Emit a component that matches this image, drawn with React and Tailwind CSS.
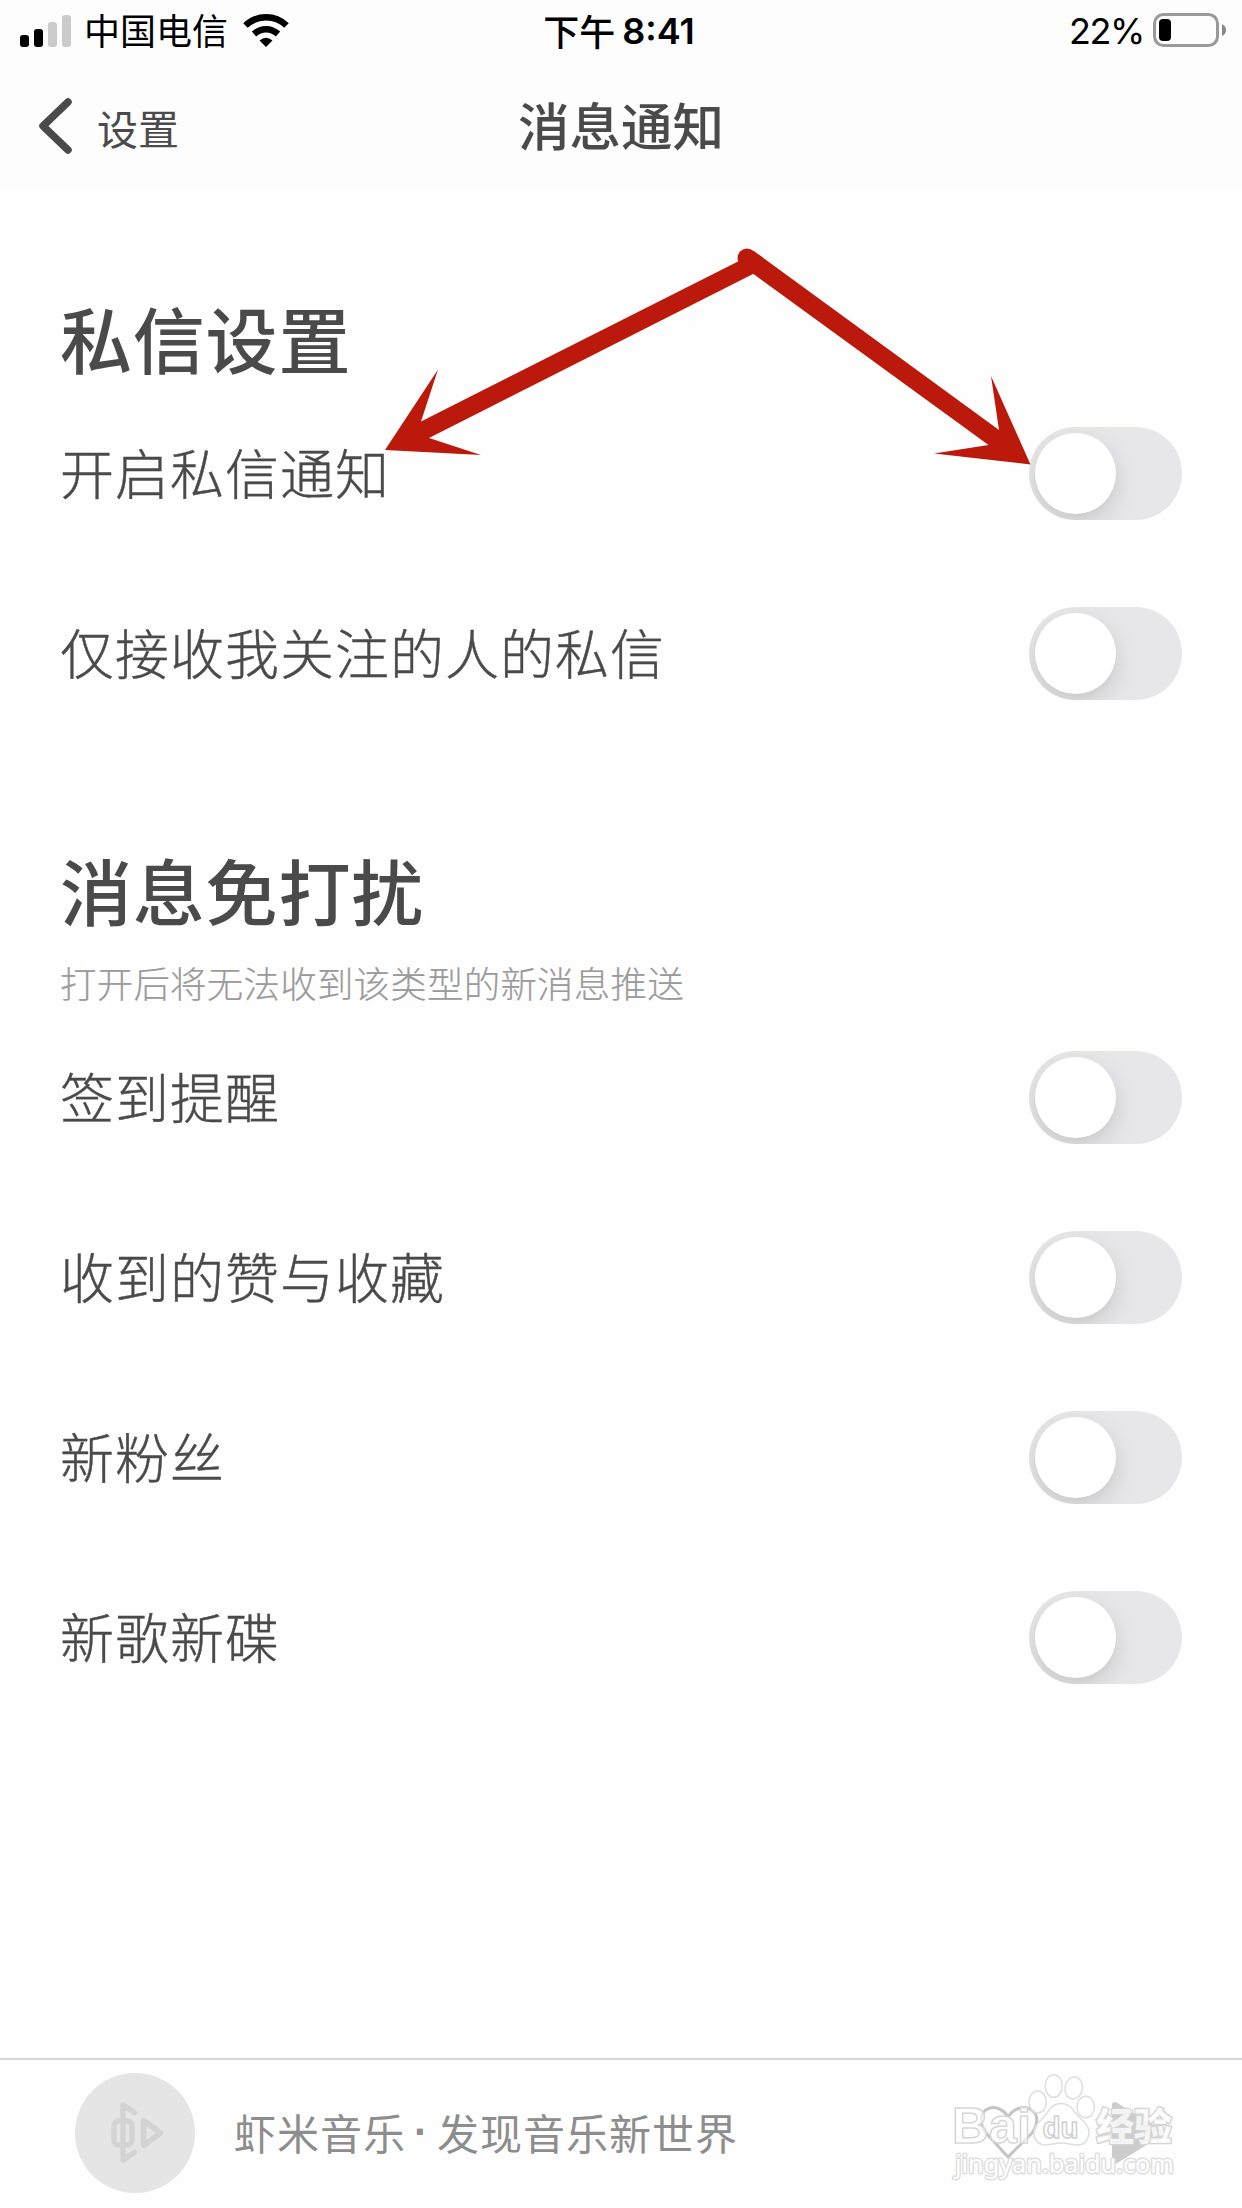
import React from "react";

const messageRows = ["开启私信通知", "仅接收我关注的人的私信"];
const quietRows = ["签到提醒", "收到的赞与收藏", "新粉丝", "新歌新碟"];

function Toggle() {
  return (
    <span className="block h-[93px] w-[153px] overflow-hidden rounded-full bg-[#e7e7e9] p-[6px]">
      <span className="block size-[81px] rounded-full bg-white shadow-[0_9px_24px_rgba(0,0,0,0.13),0_3px_6px_rgba(0,0,0,0.02)]" />
    </span>
  );
}

function Row({ label }) {
  return (
    <div className="flex h-[180px] items-center justify-between">
      <span className="-mt-[3px] text-[54px] font-light leading-[76px] tracking-[1px] [-webkit-text-stroke:0.4px_#4a4a4a]">{label}</span>
      <Toggle />
    </div>
  );
}

function StatusBar() {
  return (
    <div className="flex h-[62px] items-center justify-between pl-5 pr-[15px] text-black">
      <div className="flex w-[400px] items-center">
        <svg className="h-8 w-[51px]" viewBox="0 0 51 32">
          <rect x="0" y="20" width="9" height="12" rx="3" />
          <rect x="14" y="14" width="9" height="18" rx="3" />
          <rect x="28" y="7" width="9" height="25" rx="3" fill="#cbcbcb" />
          <rect x="42" y="0" width="9" height="32" rx="3" fill="#cbcbcb" />
        </svg>
        <span className="-mt-1 ml-[13px] text-[36px] leading-[50px]">中国电信</span>
        <svg className="-mt-[2px] ml-[15px] h-[33px] w-[46px]" viewBox="0 0 46 33" fill="none" stroke="#000" strokeWidth="6.5">
          <path d="M2.500 11.500C14 .5 32 .5 43.500 11.500" />
          <path d="M11 20C18 13.500 28 13.500 35 20" />
          <path d="M16.500 26.500Q23 21 29.500 26.500L23 33Z" fill="#000" stroke="none" />
        </svg>
      </div>
      <div className="-ml-[9px] flex items-center text-[36px] font-medium leading-[50px]">
        <span className="-mt-[3px]">下午</span>
        <span className="ml-[7px] font-[Inter] text-[36px] font-semibold">8:41</span>
      </div>
      <div className="flex w-[400px] items-center justify-end">
        <span className="font-[Inter] text-[36px] font-normal leading-[50px] tracking-[-1.400px]">22%</span>
        <svg className="-mt-[2px] ml-[9px] h-[34px] w-[74px]" viewBox="0 0 74 34">
          <rect x="1.500" y="1.500" width="63" height="31" rx="9" fill="none" stroke="#999" strokeWidth="3" />
          <rect x="6" y="6" width="12" height="22" rx="4" />
          <path d="M69 11Q73 13 73 17T69 23Z" fill="#888" />
        </svg>
      </div>
    </div>
  );
}

function Arrows() {
  return (
    <svg className="pointer-events-none absolute left-[380px] top-[240px] h-[230px] w-[655px]" viewBox="380 240 655 230" fill="#bb190b">
      <path d="M385 450L438 369.500L421 421.500L739 261L754 273.500L429 438L481 455Z" />
      <path d="M741 265.500L753.500 250.700L999 430L991 376L1030.500 464.500L934 453.500L988.500 445L753.500 274Z" />
      <circle cx="747" cy="258" r="9.500" />
    </svg>
  );
}

function Watermark() {
  return (
    <svg
      className="pointer-events-none absolute right-[18px] top-[10px] h-[135px] w-[280px]"
      viewBox="944 2070 280 135"
      fill="#fff"
      fillOpacity="0.65"
      stroke="#dedede"
      strokeWidth="1.500"
    >
      <ellipse cx="1037.700" cy="2102" rx="8.700" ry="11" />
      <ellipse cx="1053.700" cy="2086" rx="8.500" ry="11.300" />
      <ellipse cx="1073.700" cy="2088" rx="8.800" ry="11" transform="rotate(8 1073.700 2088)" />
      <ellipse cx="1085.700" cy="2107" rx="8.700" ry="10.800" />
      <path d="M1061 2103.500C1050 2103.500 1048 2114 1041 2120C1034 2126 1032 2134 1036 2140C1042 2149 1051 2143 1061 2143S1081 2149 1087 2140C1091 2132 1089 2126 1081 2119C1074 2113 1072 2103.500 1061 2103.500Z" />
      <g fontFamily="Liberation Sans, sans-serif" fontWeight="700">
        <text x="952" y="2142.500" fontSize="50" textLength="79" lengthAdjust="spacingAndGlyphs" stroke="#d6d6d6">Bai</text>
        <text x="1042.500" y="2138" fontSize="30" textLength="36" lengthAdjust="spacingAndGlyphs" stroke="#d0d0d0">du</text>
      </g>
      <g style={{ paintOrder: "stroke" }} fillOpacity="0.8" strokeLinejoin="round">
        <text x="1096" y="2140" fontSize="38" fontWeight="900" textLength="76" strokeWidth="2.500" stroke="#d4d4d4" fontFamily="Noto Sans CJK SC, sans-serif">经验</text>
        <text x="955" y="2173" fontSize="25.500" fillOpacity="1" strokeWidth="3" textLength="219" lengthAdjust="spacingAndGlyphs" fontFamily="Noto Sans, sans-serif">jingyan.baidu.com</text>
      </g>
    </svg>
  );
}

function Player() {
  return (
    <footer className="relative flex h-[150px] items-start border-t-2 border-[#d5d5d5] pl-[75px] pt-[13px]">
      <div className="flex size-[120px] shrink-0 items-center justify-center rounded-full bg-[#e5e5e5]">
        <svg className="size-[120px]" viewBox="75 2073 120 120" fill="none" stroke="#d3d3d3" strokeWidth="5.500" strokeLinecap="round" strokeLinejoin="round">
          <rect x="114" y="2121" width="18" height="24" rx="5" />
          <path d="M134.500 2112.500L123 2105V2160L134.500 2152.500M143.500 2120.500V2145.500L160.500 2133Z" />
        </svg>
      </div>
      <span className="ml-[39px] mt-[28px] flex text-[42px] leading-[62px] tracking-[1px] text-[#8d8d8d]">
        虾米音乐
        <span className="flex w-[31px] justify-center font-['Liberation_Sans'] font-bold">·</span>
        发现音乐新世界
      </span>
      <svg className="absolute left-[980px] top-[40px] h-[66px] w-[190px]" viewBox="980 2100 190 66">
        <path d="M1008 2157L986 2133C970 2110 997 2098 1008 2117C1020 2098 1048 2110 1032 2133Z" fill="none" stroke="#c4c4c4" strokeWidth="3" strokeLinejoin="round" />
        <path d="M1115 2105L1160 2133L1115 2161Z" fill="#ccc" stroke="#ccc" strokeWidth="6" strokeLinejoin="round" />
      </svg>
      <Watermark />
    </footer>
  );
}

export default function App() {
  return (
    <div lang="zh-CN" className="relative flex h-[2208px] w-[1242px] flex-col overflow-hidden bg-[#fefefe] font-['Noto_Sans_CJK_SC',sans-serif] text-[#4a4a4a]">
      <header className="h-[190px] bg-[#fdfdfd]">
        <StatusBar />
        <nav className="grid h-[128px] grid-cols-3 items-center">
          <div className="flex items-center pl-[39px]">
            <svg className="h-[58px] w-[34px]" viewBox="0 0 34 58" fill="none" stroke="#4a4a4a" strokeWidth="7.500" strokeLinecap="round" strokeLinejoin="round">
              <path d="M29 5L4 29L29 53" />
            </svg>
            <span className="ml-6 mt-[2px] text-[41px] leading-[60px]">设置</span>
          </div>
          <h1 className="-mt-1 text-center text-[51.500px] font-medium leading-[74px]">消息通知</h1>
        </nav>
      </header>
      <main className="grow px-[60px]">
        <section className="pt-[95px]">
          <h2 className="h-[98px] text-[72px] font-medium leading-[104px] tracking-[0.800px]">私信设置</h2>
          {messageRows.map((label) => <Row key={label} label={label} />)}
        </section>
        <section className="pt-[94px]">
          <h2 className="h-[107px] text-[72px] font-medium leading-[104px] tracking-[0.800px]">消息免打扰</h2>
          <p className="h-[63px] text-[36.500px] font-light leading-[78px] tracking-[0.200px] text-[#9b9b9b] [-webkit-text-stroke:0.2px_#9b9b9b]">打开后将无法收到该类型的新消息推送</p>
          {quietRows.map((label) => <Row key={label} label={label} />)}
        </section>
      </main>
      <Player />
      <Arrows />
    </div>
  );
}
